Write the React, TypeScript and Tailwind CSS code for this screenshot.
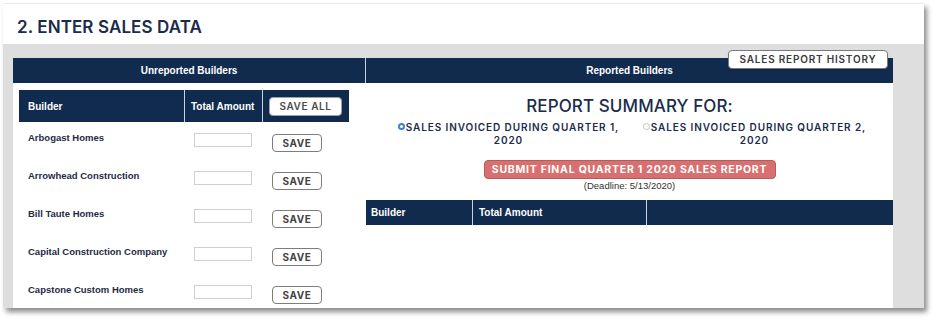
const builders = [
  'Arbogast Homes',
  'Arrowhead Construction',
  'Bill Taute Homes',
  'Capital Construction Company',
  'Capstone Custom Homes',
]

const navy = 'bg-[#112b4f]'

function UnreportedTable() {
  return (
    <div className="w-[330px]">
      <div className={`flex h-[32px] ${navy} text-white`}>
        <div className="flex w-[166px] items-center border-r border-[#c9d3e0] pl-[9px] font-['Liberation_Sans',Arial,sans-serif] text-[10px] font-bold">
          Builder
        </div>
        <div className="flex w-[78px] items-center border-r border-[#c9d3e0] pl-[6px] font-['Liberation_Sans',Arial,sans-serif] text-[10px] font-bold">
          Total Amount
        </div>
        <div className="flex flex-1 items-center pl-[6px]">
          <button className="h-[19px] w-[73px] rounded-[4px] border border-[#9aa3ad] bg-white font-['Inter',sans-serif] text-[10px] font-semibold tracking-[0.6px] text-[#4a4a4a]">
            SAVE ALL
          </button>
        </div>
      </div>
      {builders.map((name) => (
        <div key={name} className="flex h-[38px] items-start pt-[10px]">
          <div className="w-[166px] pl-[9px] font-['Liberation_Sans',Arial,sans-serif] text-[9.5px] leading-[12px] font-bold text-[#1f2a44]">
            {name}
          </div>
          <div className="w-[78px] pl-[9px]">
            <div className="mt-[1px] h-[14px] w-[58px] border border-[#cfcfcf] bg-white" />
          </div>
          <div className="flex pl-[9px] pt-[2px]">
            <button className="h-[18px] w-[50px] rounded-[4px] border border-[#7d7d7d] bg-white font-['Inter',sans-serif] text-[10px] font-bold tracking-[0.6px] text-[#444]">
              SAVE
            </button>
          </div>
        </div>
      ))}
    </div>
  )
}

function QuarterOption({ label, checked }: { label: string; checked: boolean }) {
  return (
    <div className="w-[232px] text-center font-['Inter',sans-serif] text-[10px] leading-[13px] font-semibold tracking-[0.9px] text-[#1b2b4b]">
      <span
        className={`mr-[1px] inline-block h-[7px] w-[7px] rounded-full align-[1px] ${
          checked ? 'border-2 border-[#3b82d6] bg-white' : 'border border-[#c4c4c4] bg-white'
        }`}
      />
      {label}
      <br />
      2020
    </div>
  )
}

function ReportedPanel() {
  return (
    <div className="flex flex-1 flex-col items-center">
      <div className="mt-[13px] font-['Inter',sans-serif] text-[17px] leading-[20px] font-medium tracking-[0.1px] text-[#1b2b4b]">
        REPORT SUMMARY FOR:
      </div>
      <div className="mt-[5px] flex gap-[14px] pl-[4px]">
        <QuarterOption label="SALES INVOICED DURING QUARTER 1," checked />
        <QuarterOption label="SALES INVOICED DURING QUARTER 2," checked={false} />
      </div>
      <button className="mt-[13px] h-[19px] w-[292px] rounded-[4px] border border-[#b65b5b] bg-[#d8706f] font-['Inter',sans-serif] text-[10.5px] font-bold tracking-[0.75px] text-white">
        SUBMIT FINAL QUARTER 1 2020 SALES REPORT
      </button>
      <div className="mt-[1px] font-['Liberation_Sans',Arial,sans-serif] text-[9.5px] leading-[11px] text-[#333]">
        (Deadline: 5/13/2020)
      </div>
      <div
        className={`mt-[9px] flex h-[25px] w-full ${navy} font-['Liberation_Sans',Arial,sans-serif] text-[10px] font-bold text-white`}
      >
        <div className="flex w-[107px] items-center border-r border-[#c9d3e0] pl-[5px]">Builder</div>
        <div className="flex w-[174px] items-center border-r border-[#c9d3e0] pl-[6px]">Total Amount</div>
        <div className="flex-1" />
      </div>
    </div>
  )
}

export default function App() {
  return (
    <div className="h-[322px] w-[938px] bg-white pl-[3px] pt-[3px]">
      <div className="flex h-[305px] w-[921px] flex-col overflow-hidden border-t border-[#ececec] bg-white shadow-[3px_4px_5px_rgba(0,0,0,0.45)]">
        <div className="h-[40px] shrink-0 pl-[14px] pt-[13px] font-['Inter',sans-serif] text-[17px] leading-[20px] font-semibold tracking-[0.1px] text-[#1b2b4b]">
          2. ENTER SALES DATA
        </div>
        <div className="min-h-0 flex-1 bg-[#dedede] pl-[10px] pr-[31px] pt-[14px]">
          <div className="relative h-full bg-white">
            <button className="absolute left-[715px] top-[-8px] h-[19px] w-[160px] rounded-[4px] border border-[#7a7a7a] bg-white font-['Inter',sans-serif] text-[10px] font-semibold tracking-[0.8px] text-[#3a3a3a] shadow-[0_1px_1px_rgba(0,0,0,0.2)]">
              SALES REPORT HISTORY
            </button>
            <div className={`flex h-[25px] ${navy} font-['Liberation_Sans',Arial,sans-serif] text-[10px] font-bold text-white`}>
              <div className="flex w-[353px] items-center justify-center border-r border-[#c9d3e0]">
                Unreported Builders
              </div>
              <div className="flex flex-1 items-center justify-center">Reported Builders</div>
            </div>
            <div className="flex">
              <div className="w-[353px] pl-[6px] pt-[7px]">
                <UnreportedTable />
              </div>
              <ReportedPanel />
            </div>
          </div>
        </div>
      </div>
    </div>
  )
}
